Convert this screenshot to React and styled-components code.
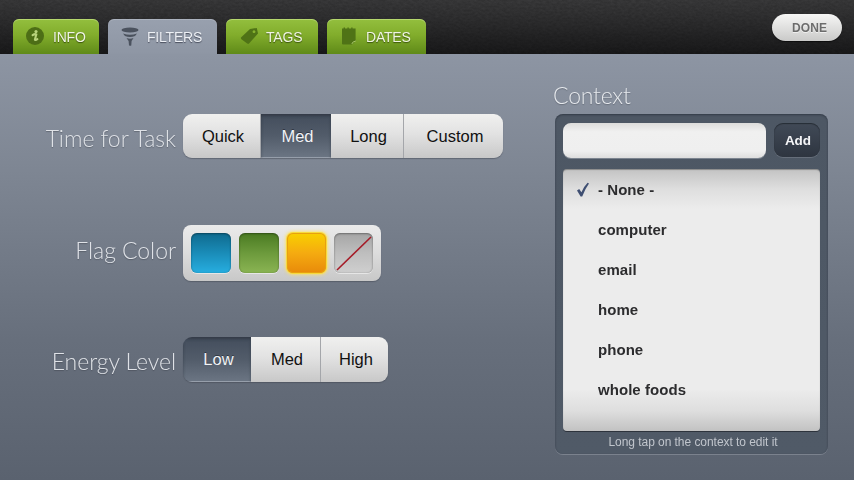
import React from "react";
import styled, { createGlobalStyle, css } from "styled-components";

const Global = createGlobalStyle`
  html, body { margin: 0; padding: 0; background: #6f7784; }
  body { width: 854px; height: 480px; overflow: hidden; font-family: "Liberation Sans", Arial, sans-serif; }
`;

const Page = styled.div`
  width: 854px; height: 480px; display: flex; flex-direction: column; overflow: hidden;
  background: linear-gradient(180deg, #8d95a3 54px, #7e8693 170px, #676f7c 340px, #5a626f 480px);
`;
const Header = styled.header`
  position: relative; height: 54px; flex: none; display: flex; align-items: flex-end;
  justify-content: space-between; padding: 0 12px 0 13px; box-sizing: border-box;
  background: linear-gradient(180deg, #323233 0, #2a2a2b 30%, #151516 100%);
  overflow: hidden;
`;
const Leather = styled.svg`
  position: absolute; inset: 0; width: 100%; height: 100%; opacity: .2; mix-blend-mode: overlay;
`;
const Tabs = styled.nav`display: flex; gap: 9px; position: relative;`;
const Tab = styled.div`
  width: ${p => p.$w}px; height: 35px; box-sizing: border-box; border-radius: 6px 6px 0 0;
  display: flex; align-items: center; padding-left: ${p => p.$pad}px; padding-top: 1px;
  font-size: 14px; letter-spacing: -.2px;
  color: #f0f5e4; text-shadow: 0 1px 1px rgba(40,60,0,.75);
  background: linear-gradient(180deg, #93bf3e 0, #82ad2c 45%, #5f8a18 100%);
  box-shadow: inset 0 1px 0 rgba(210,235,150,.55);
  ${p => p.$active && css`
    color: #eef1f6; text-shadow: 0 1px 1px rgba(50,55,70,.8);
    background: linear-gradient(180deg, #98a0ae 0, #8e96a4 100%);
    box-shadow: inset 0 1px 0 rgba(200,205,215,.4);
  `}
`;
const TabIcon = styled.svg`
  width: ${p => p.$size || 24}px; height: 24px; flex: none; margin-right: ${p => p.$gap}px; margin-top: -2px;
`;
const DoneButton = styled.div`
  position: relative; align-self: flex-start; margin-top: 14px; width: 70px; height: 27px; box-sizing: border-box;
  padding-left: 5px;
  border-radius: 14px; display: flex; align-items: center; justify-content: center;
  font-size: 12px; font-weight: 700; color: #6c6c6c; letter-spacing: .1px;
  text-shadow: 0 1px 0 rgba(255,255,255,.6);
  background: linear-gradient(180deg, #f6f6f5 0, #dededd 55%, #c9c9c8 100%);
  box-shadow: 0 1px 1px rgba(0,0,0,.6);
`;
const Main = styled.main`
  flex: 1; display: flex; align-items: flex-start; padding-left: 44px; position: relative;
`;
const Form = styled.section`
  width: 459px; flex: none; padding-top: 60px; margin-right: 52px;
  display: flex; flex-direction: column;
`;
const Row = styled.div`
  display: flex; align-items: center; gap: 7px; margin-top: ${p => p.$top || 0}px;
`;
const Label = styled.div`
  width: 132px; flex: none; display: flex; justify-content: flex-end; white-space: nowrap;
  padding-top: ${p => p.$pt || 0}px; padding-bottom: ${p => p.$pb || 0}px;
  font-family: Lato, "Liberation Sans", sans-serif; font-weight: 300; font-size: 23px; letter-spacing: -.05px;
  color: #dfe2e7; text-shadow: 0 1px 1px rgba(50,55,65,.4);
`;
const Segmented = styled.div`
  display: flex; height: ${p => p.$h}px; border-radius: 9px; overflow: hidden;
  box-shadow: 0 1px 1px rgba(60,65,75,.45);
`;
const Segment = styled.div`
  width: ${p => p.$w}px; box-sizing: border-box; display: flex; align-items: center; justify-content: center;
  padding-left: 3px; font-size: 16.5px; color: #111;
  background: linear-gradient(180deg, #f0f0ef 0, #e2e2e2 45%, #c8c8c8 100%);
  border-right: 1px solid #a4a6aa;
  &:last-child { border-right: 0; }
  ${p => p.$on && css`
    color: #f1f3f6; border-right: 0;
    text-shadow: 0 -1px 0 rgba(30,35,45,.6);
    background: linear-gradient(180deg, #434d5c 0, #525c6a 50%, #6c7684 100%);
    box-shadow: inset 0 2px 3px rgba(30,35,45,.45), inset 0 -1px 0 rgba(200,205,215,.5);
  `}
`;
const SwatchTray = styled.div`
  width: 198px; height: 56px; box-sizing: border-box; border-radius: 8px; padding: 8px;
  display: flex; gap: 8px;
  background: linear-gradient(180deg, #eaeaea 0, #dcdcdc 50%, #c8c8c8 100%);
  box-shadow: 0 1px 1px rgba(60,65,75,.45);
`;
const Swatch = styled.div`
  width: ${p => p.$w}px; height: 40px; border-radius: 6px; flex: none; position: relative; overflow: hidden;
  background: ${p => p.$bg};
  box-shadow: inset 0 1px 2px rgba(0,0,0,.3), inset 0 0 2px rgba(0,0,0,.2), 0 1px 0 rgba(255,255,255,.5);
  ${p => p.$glow && css`
    overflow: visible;
    box-shadow: 0 0 0 1px #f7d93c, 0 0 3px 2px rgba(255,225,90,.75), inset 0 0 0 1px #e8a010;
  `}
`;
const Slash = styled.svg`position: absolute; inset: 0; width: 100%; height: 100%;`;
const ContextColumn = styled.aside`
  width: 275px; flex: none; display: flex; flex-direction: column;
`;
const ContextTitle = styled.h2`
  margin: 26px 0 0 -2px; height: 34px; line-height: 31px; font-family: Lato, "Liberation Sans", sans-serif;
  font-weight: 300; font-size: 23px; letter-spacing: -.2px; color: #e6e9ed;
  text-shadow: 0 1px 1px rgba(60,65,75,.4);
`;
const Panel = styled.div`
  width: 273px; height: 340px; box-sizing: border-box; border-radius: 8px; padding: 9px 8px 0;
  display: flex; flex-direction: column;
  background: linear-gradient(180deg, #4d5764 0, #505a67 100%);
  box-shadow: inset 0 1px 2px rgba(20,25,35,.45), 0 1px 0 rgba(170,175,185,.4);
`;
const InputRow = styled.div`display: flex; gap: 8px; height: 35px; flex: none;`;
const TextInput = styled.div`
  width: 203px; border-radius: 8px;
  background: linear-gradient(180deg, #dcdcdb 0, #f0f0f0 25%, #efefef 80%, #dedede 100%);
  box-shadow: 0 1px 0 rgba(170,175,185,.5);
`;
const AddButton = styled.div`
  width: 46px; height: 34px; box-sizing: border-box; padding-left: 2px; border-radius: 9px; display: flex; align-items: center; justify-content: center;
  font-size: 13.5px; font-weight: 700; color: #f4f5f7;
  background: linear-gradient(180deg, #414a57 0, #2e3540 100%);
  box-shadow: inset 0 1px 1px rgba(20,25,30,.6), 0 1px 0 rgba(140,145,155,.4);
`;
const List = styled.ul`
  list-style: none; margin: 11px 0 0; padding: 0; height: 262px; box-sizing: border-box; border-radius: 4px;
  position: relative;
  background: linear-gradient(180deg, #c3c3c3 0, #dedede 20px, #ececec 40px, #ececec 220px, #dedede 242px, #c2c2c2 262px);
  box-shadow: 0 1px 0 #2d333c, inset 0 1px 1px rgba(0,0,0,.3);
`;
const Item = styled.li`
  height: 40px; display: flex; align-items: center; font-size: 15px; font-weight: 700;
  letter-spacing: .05px; color: #2c2c2e;
`;
const CheckSlot = styled.span`
  width: 35px; flex: none; display: flex; justify-content: flex-end; padding-right: 8px; box-sizing: border-box;
`;
const Hint = styled.div`
  flex: 1; display: flex; align-items: center; justify-content: center; padding: 0 0 1px 3px;
  font-size: 12px; letter-spacing: -.05px; color: #c0c5cc;
`;

const InfoIcon = () => (
  <TabIcon $gap={5} viewBox="0 0 24 24">
    <circle cx="11" cy="12" r="9" fill="#4d6e16" />
    <circle cx="12" cy="7.6" r="1.6" fill="#b9d37c" />
    <path d="M8.6 11.2 Q11 9.5 12.3 10.4 L10.9 15.6 Q10.9 16.6 13.4 15.2" fill="none" stroke="#b9d37c" strokeWidth="2.1" strokeLinecap="round" />
  </TabIcon>
);
const FunnelIcon = () => (
  <TabIcon $gap={3} viewBox="0 0 24 24">
    <ellipse cx="10" cy="6" rx="8.5" ry="2.6" fill="#4b525e" />
    <path d="M3 9.4 Q10 12 17 9.4 L15 12 Q10 13.8 5 12 Z" fill="#4b525e" />
    <path d="M6.5 14 Q10 15.4 13.5 14 L11.6 17 L11.3 21.5 Q10 22.2 9 21.2 L8.6 17 Z" fill="#4b525e" />
  </TabIcon>
);
const TagIcon = () => (
  <TabIcon $gap={7} $size={19} viewBox="0 0 19 24">
    <path fillRule="evenodd" fill="#4f7316" d="M1 13.5 L10 5 L16.8 4 L18 9.6 L9 19.6 Q8.2 20.2 7.2 19.6 L1.4 15.2 Q.6 14.4 1 13.5 Z M14 6.3 a1.4 1.4 0 1 0 .01 0 Z" />
  </TabIcon>
);
const NotesIcon = () => (
  <TabIcon $gap={9} $size={16} viewBox="0 0 16 24">
    <path fill="#4f7316" d="M1 4.5 h1.6 v-1 h1.4 v1 h2.4 v-1 h1.4 v1 h2.4 v-1 h1.4 v1 h3 V17 L11 20.5 H2 Q1 20.5 1 19.5 Z" />
    <path d="M10.8 20 Q11.5 17.4 14.8 17" fill="none" stroke="#a8c868" strokeWidth="1" />
  </TabIcon>
);
const Check = () => (
  <svg width="14" height="15" viewBox="0 0 14 15">
    <path d="M1 8.5 L3.2 7 L5.4 10.2 Q7.8 4.6 11.6 .8 L13 1.6 Q9 7 6.2 14.6 H4.6 Z" fill="#3f4f72" />
  </svg>
);

const times = [["Quick", 78], ["Med", 70, true], ["Long", 73], ["Custom", 99]];
const energy = [["Low", 68, true], ["Med", 70], ["High", 67]];
const contexts = ["- None -", "computer", "email", "home", "phone", "whole foods"];

function Leathers() {
  return (
    <Leather aria-hidden="true">
      <filter id="leather">
        <feTurbulence type="fractalNoise" baseFrequency="0.28 0.5" numOctaves="3" seed="7" />
        <feColorMatrix values="0 0 0 0 1  0 0 0 0 1  0 0 0 0 1  1.6 0 0 0 -.45" />
      </filter>
      <rect width="100%" height="100%" filter="url(#leather)" />
    </Leather>
  );
}

export default function App() {
  return (
    <Page>
      <Global />
      <Header>
        <Leathers />
        <Tabs>
          <Tab $w={86} $pad={11}><InfoIcon />INFO</Tab>
          <Tab $w={109} $pad={12} $active><FunnelIcon />FILTERS</Tab>
          <Tab $w={92} $pad={14}><TagIcon />TAGS</Tab>
          <Tab $w={99} $pad={14}><NotesIcon />DATES</Tab>
        </Tabs>
        <DoneButton>DONE</DoneButton>
      </Header>
      <Main>
        <Form>
          <Row>
            <Label $pt={4}>Time for Task</Label>
            <Segmented $h={44}>
              {times.map(([t, w, on]) => <Segment key={t} $w={w} $on={on}>{t}</Segment>)}
            </Segmented>
          </Row>
          <Row $top={67}>
            <Label $pb={6}>Flag Color</Label>
            <SwatchTray>
              <Swatch $w={40} $bg="linear-gradient(180deg,#0f6a8e 0,#1a8cb8 50%,#27aee0 100%)" />
              <Swatch $w={40} $bg="linear-gradient(180deg,#4a7a22 0,#6c9a3c 50%,#8ab453 100%)" />
              <Swatch $w={39} $glow $bg="linear-gradient(180deg,#f8d000 0,#f5ab10 50%,#e88a0a 100%)" />
              <Swatch $w={39} $bg="linear-gradient(180deg,#a5a5a5 0,#bebebe 50%,#cfcfcf 100%)">
                <Slash viewBox="0 0 39 40">
                  <path d="M3 37 L37 4" stroke="#a51c28" strokeWidth="1.6" />
                </Slash>
              </Swatch>
            </SwatchTray>
          </Row>
          <Row $top={56}>
            <Label $pt={2}>Energy Level</Label>
            <Segmented $h={45}>
              {energy.map(([t, w, on]) => <Segment key={t} $w={w} $on={on}>{t}</Segment>)}
            </Segmented>
          </Row>
        </Form>
        <ContextColumn>
          <ContextTitle>Context</ContextTitle>
          <Panel>
            <InputRow>
              <TextInput />
              <AddButton>Add</AddButton>
            </InputRow>
            <List>
              {contexts.map((c, i) => (
                <Item key={c}>
                  <CheckSlot>{i === 0 && <Check />}</CheckSlot>
                  {c}
                </Item>
              ))}
            </List>
            <Hint>Long tap on the context to edit it</Hint>
          </Panel>
        </ContextColumn>
      </Main>
    </Page>
  );
}
